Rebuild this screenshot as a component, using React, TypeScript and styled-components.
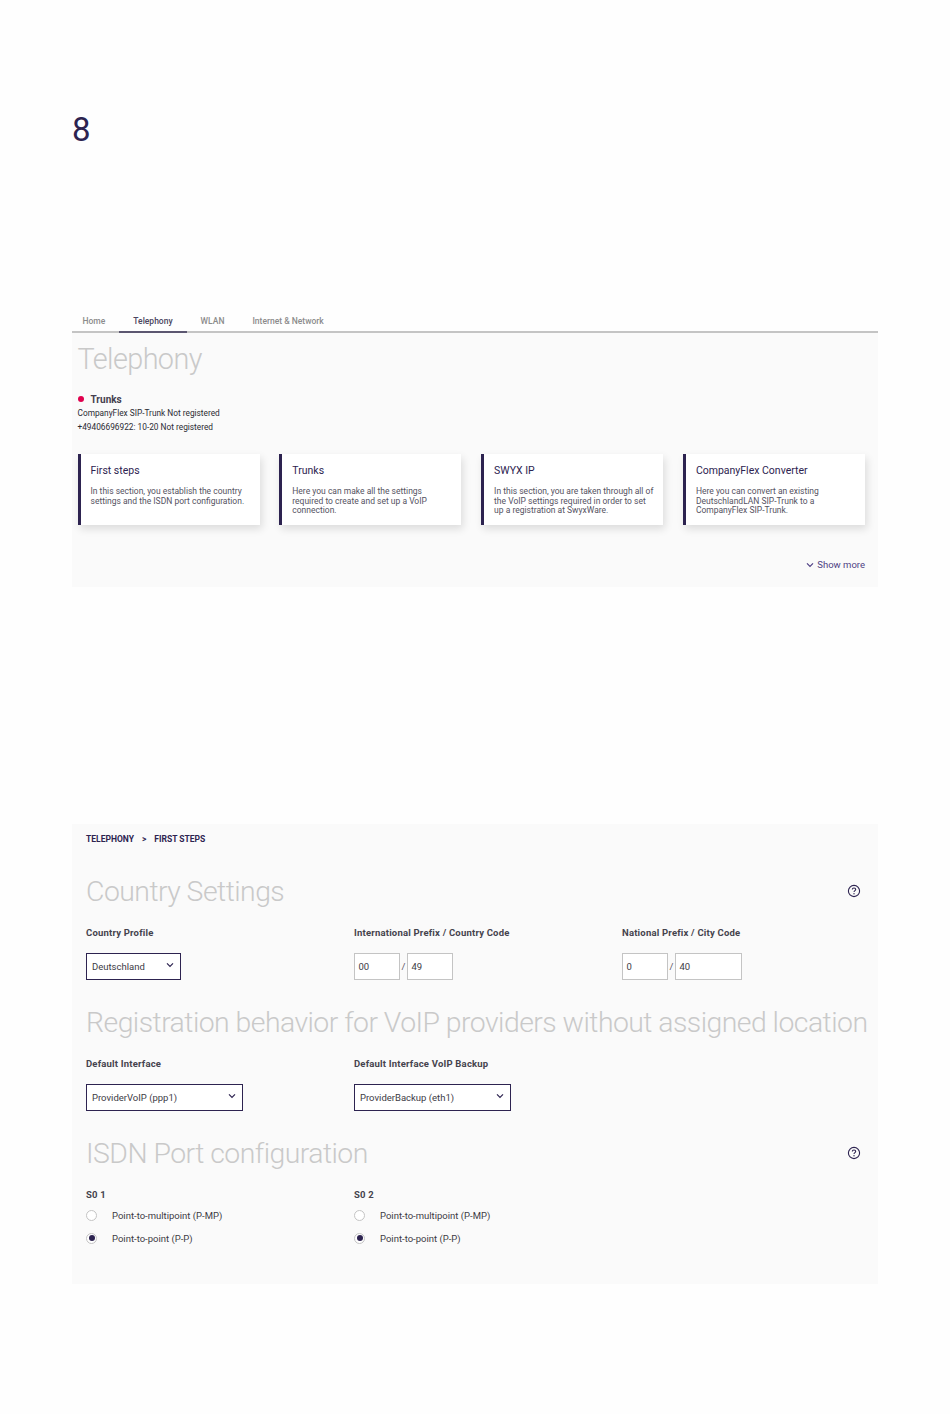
import React from 'react';
import styled, { createGlobalStyle } from 'styled-components';

const GlobalStyle = createGlobalStyle`
  html, body {
    margin: 0;
    padding: 0;
    background: #fefefe;
    font-family: Roboto, "Liberation Sans", sans-serif;
  }
`;

const Page = styled.div`
  width: 806px;
  height: 1414px;
  margin-left: 72px;
  overflow: hidden;
`;

const PageNumber = styled.div`
  margin: 111px 0 0 0;
  height: 201px;
  font-size: 33px;
  line-height: 38px;
  color: #2d2350;
`;

// Tab strip of the telephony overview
const Tabs = styled.div`
  display: flex;
  height: 19px;
  border-bottom: 2px solid #c4c4c4;
`;

const Tab = styled.div<{ $active?: boolean }>`
  padding: 0 14px;
  height: 21px;
  box-sizing: border-box;
  line-height: 19px;
  font-size: 8.5px;
  font-weight: 500;
  color: ${({ $active }) => ($active ? '#4a4560' : '#8c8c8c')};
  border-bottom: ${({ $active }) => ($active ? '2px solid #5b5670' : 'none')};

  &:first-child {
    padding-left: 10.5px;
  }
`;

const OverviewPanel = styled.section`
  height: 254px;
  background: #fafafa;
  padding: 0 13px 0 5.5px;
  box-sizing: border-box;
`;

const PageTitle = styled.h1`
  margin: 0;
  padding-top: 8px;
  font-size: 28.8px;
  line-height: 36px;
  font-weight: 300;
  letter-spacing: -0.58px;
  color: #c9c9c9;
`;

const StatusHead = styled.div`
  display: flex;
  align-items: center;
  margin-top: 15px;
  height: 14px;
  font-size: 10px;
  font-weight: 700;
  color: #45404f;
`;

const Dot = styled.span`
  width: 6px;
  height: 6px;
  margin-right: 7px;
  border-radius: 50%;
  background: #e0004d;
`;

const StatusLine = styled.div`
  font-size: 8.3px;
  line-height: 14px;
  color: #2b2b33;
`;

const CardRow = styled.div`
  display: grid;
  grid-template-columns: repeat(4, 182px);
  column-gap: 19.8px;
  margin-top: 20px;
`;

const Card = styled.article`
  height: 71px;
  box-sizing: border-box;
  background: #fff;
  border-left: 3px solid #2d2350;
  padding: 10px 8px 0 10px;
  box-shadow: 2px 4px 8px rgba(0, 0, 0, 0.12);
`;

const CardTitle = styled.h3`
  margin: 0 0 9px;
  font-size: 10.5px;
  line-height: 14px;
  font-weight: 400;
  color: #2d2350;
`;

const CardText = styled.p`
  margin: 0;
  font-size: 8.5px;
  line-height: 9.6px;
  color: #55525f;
`;

const CardLine = styled.span`
  display: block;
`;

const ShowMore = styled.div`
  display: flex;
  justify-content: flex-end;
  align-items: center;
  gap: 3px;
  margin-top: 34px;
  font-size: 9.5px;
  line-height: 12px;
  color: #4f3f83;
`;

const Spacer = styled.div`
  height: 237px;
`;

const SettingsPanel = styled.section`
  height: 460px;
  background: #fafafa;
  padding: 10px 11px 0 14px;
  box-sizing: border-box;
`;

const Breadcrumb = styled.div`
  display: flex;
  gap: 8px;
  font-size: 8.5px;
  line-height: 11px;
  font-weight: 700;
  color: #2d2350;
`;

const SectionHead = styled.div<{ $top: number }>`
  display: flex;
  justify-content: space-between;
  align-items: center;
  margin-top: ${({ $top }) => $top}px;
  height: 36px;
`;

const SectionTitle = styled.h2`
  margin: 0;
  font-size: 28.4px;
  line-height: 36px;
  font-weight: 300;
  letter-spacing: -0.54px;
  white-space: nowrap;
  color: #c9c9c9;
`;

const HelpIcon = styled.svg`
  width: 14px;
  height: 14px;
  margin: 0 6px 3px 0;
  flex: none;
`;

const FieldGrid = styled.div<{ $top: number }>`
  display: grid;
  grid-template-columns: 268px 268px 1fr;
  margin-top: ${({ $top }) => $top}px;
`;

const FieldLabel = styled.div`
  font-size: 9.5px;
  line-height: 12px;
  font-weight: 700;
  color: #45434d;
  letter-spacing: 0.2px;
`;

const Select = styled.div<{ $width: number }>`
  display: flex;
  align-items: center;
  justify-content: space-between;
  box-sizing: border-box;
  width: ${({ $width }) => $width}px;
  height: 27px;
  margin-top: 14px;
  padding: 0 6px 0 5px;
  background: #fff;
  border: 1px solid #2d2350;
  font-size: 9.5px;
  color: #3d3b45;

  svg {
    margin-bottom: 3px;
  }
`;

const PrefixRow = styled.div`
  display: flex;
  align-items: center;
  margin-top: 14px;
`;

const PrefixBox = styled.div<{ $width: number }>`
  box-sizing: border-box;
  width: ${({ $width }) => $width}px;
  height: 27px;
  padding-left: 3.5px;
  line-height: 25px;
  font-size: 9.5px;
  background: #fff;
  border: 1px solid #c4c4c4;
  color: #3d3b45;
`;

const Slash = styled.span`
  width: 7px;
  text-align: center;
  font-size: 9.5px;
  color: #55525f;
`;

const RadioGroup = styled.div`
  display: flex;
  flex-direction: column;
  gap: 11px;
  margin-top: 8px;
`;

const RadioRow = styled.div`
  display: flex;
  align-items: center;
  height: 12px;
  font-size: 9.5px;
  color: #3d3b45;
`;

const RadioMark = styled.span<{ $checked?: boolean }>`
  display: flex;
  align-items: center;
  justify-content: center;
  box-sizing: border-box;
  width: 11px;
  height: 11px;
  margin-right: 15px;
  border-radius: 50%;
  background: #fff;
  border: 1px solid #c4c4c4;

  &::after {
    content: '';
    display: ${({ $checked }) => ($checked ? 'block' : 'none')};
    width: 6px;
    height: 6px;
    border-radius: 50%;
    background: #2d2350;
  }
`;

const Chevron: React.FC<{ color?: string; size?: number }> = ({ color = '#2d2350', size = 8 }) => (
  <svg width={size} height={size} viewBox="0 0 8 8" fill="none">
    <path d="M1 2.4 L4 5.4 L7 2.4" stroke={color} strokeWidth="1.2" />
  </svg>
);

const Help = () => (
  <HelpIcon viewBox="0 0 14 14" fill="none">
    <circle cx="7" cy="7" r="5.6" stroke="#2d2350" strokeWidth="1.1" />
    <path
      d="M5.3 5.6 C5.3 4.5 6.1 4 7 4 C8 4 8.7 4.6 8.7 5.5 C8.7 6.6 7 6.7 7 8.1"
      stroke="#2d2350"
      strokeWidth="1.1"
    />
    <circle cx="7" cy="9.8" r="0.7" fill="#2d2350" />
  </HelpIcon>
);

const tabs = ['Home', 'Telephony', 'WLAN', 'Internet & Network'];

const cards = [
  {
    title: 'First steps',
    lines: ['In this section, you establish the country', 'settings and the ISDN port configuration.'],
  },
  {
    title: 'Trunks',
    lines: ['Here you can make all the settings', 'required to create and set up a VoIP', 'connection.'],
  },
  {
    title: 'SWYX IP',
    lines: ['In this section, you are taken through all of', 'the VoIP settings required in order to set', 'up a registration at SwyxWare.'],
  },
  {
    title: 'CompanyFlex Converter',
    lines: ['Here you can convert an existing', 'DeutschlandLAN SIP-Trunk to a', 'CompanyFlex SIP-Trunk.'],
  },
];

const PortColumn: React.FC<{ name: string }> = ({ name }) => (
  <div>
    <FieldLabel>{name}</FieldLabel>
    <RadioGroup>
      <RadioRow>
        <RadioMark />
        Point-to-multipoint (P-MP)
      </RadioRow>
      <RadioRow>
        <RadioMark $checked />
        Point-to-point (P-P)
      </RadioRow>
    </RadioGroup>
  </div>
);

export default function App() {
  return (
    <Page>
      <GlobalStyle />
      <PageNumber>8</PageNumber>

      <Tabs>
        {tabs.map((tab) => (
          <Tab key={tab} $active={tab === 'Telephony'}>
            {tab}
          </Tab>
        ))}
      </Tabs>

      <OverviewPanel>
        <PageTitle>Telephony</PageTitle>
        <StatusHead>
          <Dot />
          Trunks
        </StatusHead>
        <StatusLine>CompanyFlex SIP-Trunk Not registered</StatusLine>
        <StatusLine>+49406696922: 10-20 Not registered</StatusLine>

        <CardRow>
          {cards.map((card) => (
            <Card key={card.title}>
              <CardTitle>{card.title}</CardTitle>
              <CardText>
                {card.lines.map((line) => (
                  <CardLine key={line}>{line}</CardLine>
                ))}
              </CardText>
            </Card>
          ))}
        </CardRow>

        <ShowMore>
          <Chevron color="#4f3f83" />
          Show more
        </ShowMore>
      </OverviewPanel>

      <Spacer />

      <SettingsPanel>
        <Breadcrumb>
          <span>TELEPHONY</span>
          <span>&gt;</span>
          <span>FIRST STEPS</span>
        </Breadcrumb>

        <SectionHead $top={29}>
          <SectionTitle>Country Settings</SectionTitle>
          <Help />
        </SectionHead>
        <FieldGrid $top={17}>
          <div>
            <FieldLabel>Country Profile</FieldLabel>
            <Select $width={95}>
              Deutschland
              <Chevron />
            </Select>
          </div>
          <div>
            <FieldLabel>International Prefix / Country Code</FieldLabel>
            <PrefixRow>
              <PrefixBox $width={46}>00</PrefixBox>
              <Slash>/</Slash>
              <PrefixBox $width={46}>49</PrefixBox>
            </PrefixRow>
          </div>
          <div>
            <FieldLabel>National Prefix / City Code</FieldLabel>
            <PrefixRow>
              <PrefixBox $width={46}>0</PrefixBox>
              <Slash>/</Slash>
              <PrefixBox $width={67}>40</PrefixBox>
            </PrefixRow>
          </div>
        </FieldGrid>

        <SectionHead $top={25}>
          <SectionTitle>Registration behavior for VoIP providers without assigned location</SectionTitle>
        </SectionHead>
        <FieldGrid $top={17}>
          <div>
            <FieldLabel>Default Interface</FieldLabel>
            <Select $width={157}>
              ProviderVoIP (ppp1)
              <Chevron />
            </Select>
          </div>
          <div>
            <FieldLabel>Default Interface VoIP Backup</FieldLabel>
            <Select $width={157}>
              ProviderBackup (eth1)
              <Chevron />
            </Select>
          </div>
        </FieldGrid>

        <SectionHead $top={25}>
          <SectionTitle>ISDN Port configuration</SectionTitle>
          <Help />
        </SectionHead>
        <FieldGrid $top={17}>
          <PortColumn name="S0 1" />
          <PortColumn name="S0 2" />
        </FieldGrid>
      </SettingsPanel>
    </Page>
  );
}
